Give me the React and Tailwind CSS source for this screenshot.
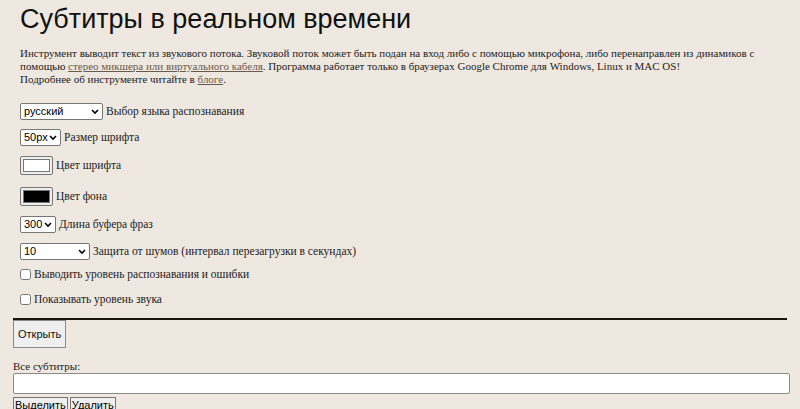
import React from "react";

const serif = { fontFamily: '"Liberation Serif", serif' };
const sans = { fontFamily: '"Liberation Sans", Arial, sans-serif' };

const Sel = ({ w, value }) => (
  <span
    className="inline-flex items-center justify-between h-[17px] border border-[#767676] rounded-[2px] bg-white px-[3px] text-[11px] text-black"
    style={{ ...sans, width: w }}
  >
    <span>{value}</span>
    <svg width="8" height="6" viewBox="0 0 8 6"><path d="M1 1l3 3 3-3" stroke="#000" strokeWidth="1.6" fill="none" /></svg>
  </span>
);

const Color = ({ c }) => (
  <span className="inline-flex w-[33px] h-[19px] border border-[#767676] rounded-[2px] bg-[#efefef] p-[2px]">
    <span className="flex-1 border border-[#777]" style={{ background: c }} />
  </span>
);

const Row = ({ children, label, h }) => (
  <div className="flex items-center gap-[3px] text-[11.5px] text-[#222]" style={{ height: h }}>
    {children}
    <span>{label}</span>
  </div>
);

export default function App() {
  return (
    <div className="w-[800px] h-[409px] overflow-hidden bg-[#efe8e0] text-black" style={serif}>
      <div className="px-[20px]">
        <h1 className="text-[27px] leading-[36px] pt-[1px] text-[#111]" style={sans}>Субтитры в реальном времени</h1>
        <p className="mt-[10px] text-[11px] leading-[13px] text-[#222]">
          Инструмент выводит текст из звукового потока. Звуковой поток может быть подан на вход либо с помощью микрофона, либо перенаправлен из динамиков с помощью{" "}
          <a className="underline text-[#6b5a4a]">стерео микшера или виртуального кабеля</a>. Программа работает только в браузерах Google Chrome для Windows, Linux и MAC OS!
          <br />
          Подробнее об инструменте читайте в <a className="underline text-[#6b5a4a]">блоге</a>.
        </p>
        <div className="mt-[17px] flex flex-col">
          <Row label="Выбор языка распознавания" h={17}><Sel w={83} value="русский" /></Row>
          <div className="mt-[9px]"><Row label="Размер шрифта" h={17}><Sel w={41} value="50px" /></Row></div>
          <div className="mt-[9px]"><Row label="Цвет шрифта" h={21}><Color c="#fff" /></Row></div>
          <div className="mt-[10px]"><Row label="Цвет фона" h={21}><Color c="#000" /></Row></div>
          <div className="mt-[9px]"><Row label="Длина буфера фраз" h={17}><Sel w={36} value="300" /></Row></div>
          <div className="mt-[10px]"><Row label="Защита от шумов (интервал перезагрузки в секундах)" h={17}><Sel w={70} value="10" /></Row></div>
          <div className="mt-[8px]"><Row label="Выводить уровень распознавания и ошибки" h={13}><input type="checkbox" className="w-[11px] h-[11px] m-0" /></Row></div>
          <div className="mt-[12px]"><Row label="Показывать уровень звука" h={13}><input type="checkbox" className="w-[11px] h-[11px] m-0" /></Row></div>
        </div>
      </div>
      <div className="px-[13px] mt-[12px]">
        <div className="border-t-2 border-[#1a1410]" />
        <button className="h-[28px] px-[4px] border border-[#8a8a8a] bg-[#efefef] text-[11px] text-[#111]" style={sans}>Открыть</button>
        <div className="mt-[12px] text-[11px] leading-[13px] text-[#222]">Все субтитры:</div>
        <div className="h-[21px] w-[777px] bg-white border border-[#8a8a8a] rounded-[2px]" />
        <div className="flex gap-[2px] mt-[3px]">
          <button className="h-[16px] px-[1px] border border-[#767676] bg-[#efefef] text-[11px] leading-[14px]" style={sans}>Выделить</button>
          <button className="h-[16px] px-[1px] border border-[#767676] bg-[#efefef] text-[11px] leading-[14px]" style={sans}>Удалить</button>
        </div>
      </div>
    </div>
  );
}
